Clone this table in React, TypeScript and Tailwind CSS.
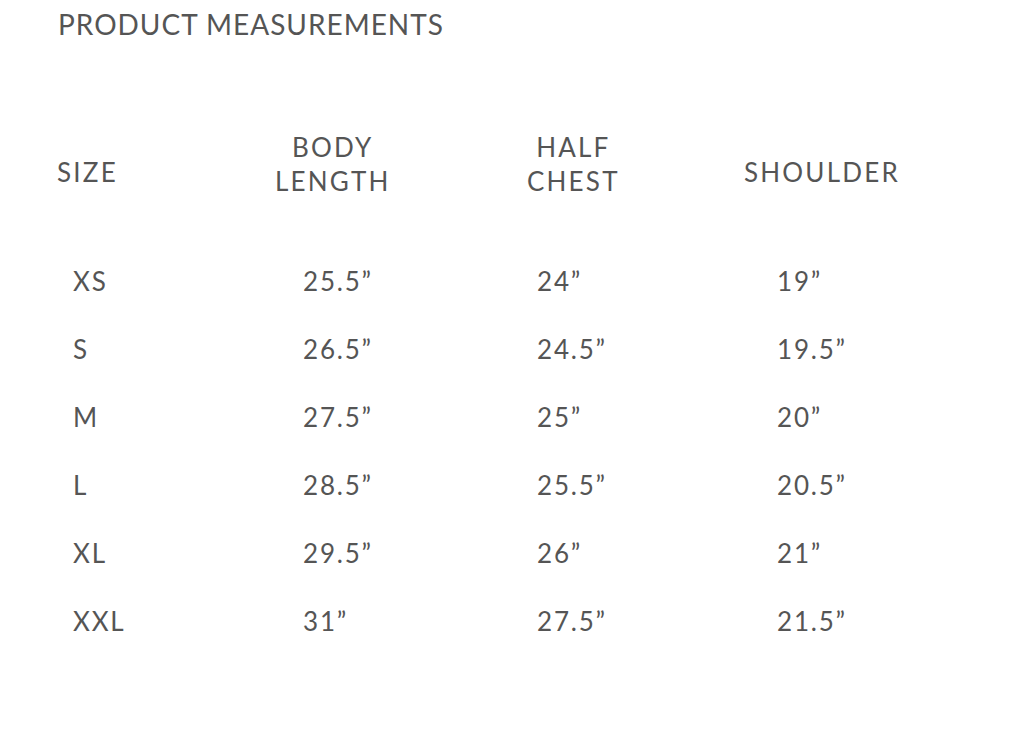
import React from "react";

const rows = [
  ["XS", "25.5\u201D", "24\u201D", "19\u201D"],
  ["S", "26.5\u201D", "24.5\u201D", "19.5\u201D"],
  ["M", "27.5\u201D", "25\u201D", "20\u201D"],
  ["L", "28.5\u201D", "25.5\u201D", "20.5\u201D"],
  ["XL", "29.5\u201D", "26\u201D", "21\u201D"],
  ["XXL", "31\u201D", "27.5\u201D", "21.5\u201D"],
];

export default function App() {
  return (
    <div
      className="w-[1024px] h-[730px] bg-white text-[#555555] overflow-hidden"
      style={{ fontFamily: "Lato, 'Open Sans', sans-serif" }}
    >
      <div className="pt-[8px] pl-[58px] text-[28px] leading-[32px] tracking-[1px]">PRODUCT MEASUREMENTS</div>
      <div className="mt-[90px] grid grid-cols-[270px_250px_220px_1fr] h-[68px] text-[26px] leading-[34px] tracking-[2.2px]">
        <div className="pl-[57px] pt-[25px]">SIZE</div>
        <div className="pl-[5px]">
          <div className="w-max text-center">
            BODY
            <br />
            LENGTH
          </div>
        </div>
        <div className="pl-[7px]">
          <div className="w-max text-center">
            HALF
            <br />
            CHEST
          </div>
        </div>
        <div className="pl-[4px] pt-[25px]">SHOULDER</div>
      </div>
      <div className="mt-[49px]">
        {rows.map((r) => (
          <div
            key={r[0]}
            className="grid grid-cols-[270px_250px_220px_1fr] h-[68px] text-[26px] leading-[68px] tracking-[1.8px]"
          >
            <div className="pl-[73px]">{r[0]}</div>
            <div className="pl-[33px]">{r[1]}</div>
            <div className="pl-[17px]">{r[2]}</div>
            <div className="pl-[37px]">{r[3]}</div>
          </div>
        ))}
      </div>
    </div>
  );
}
